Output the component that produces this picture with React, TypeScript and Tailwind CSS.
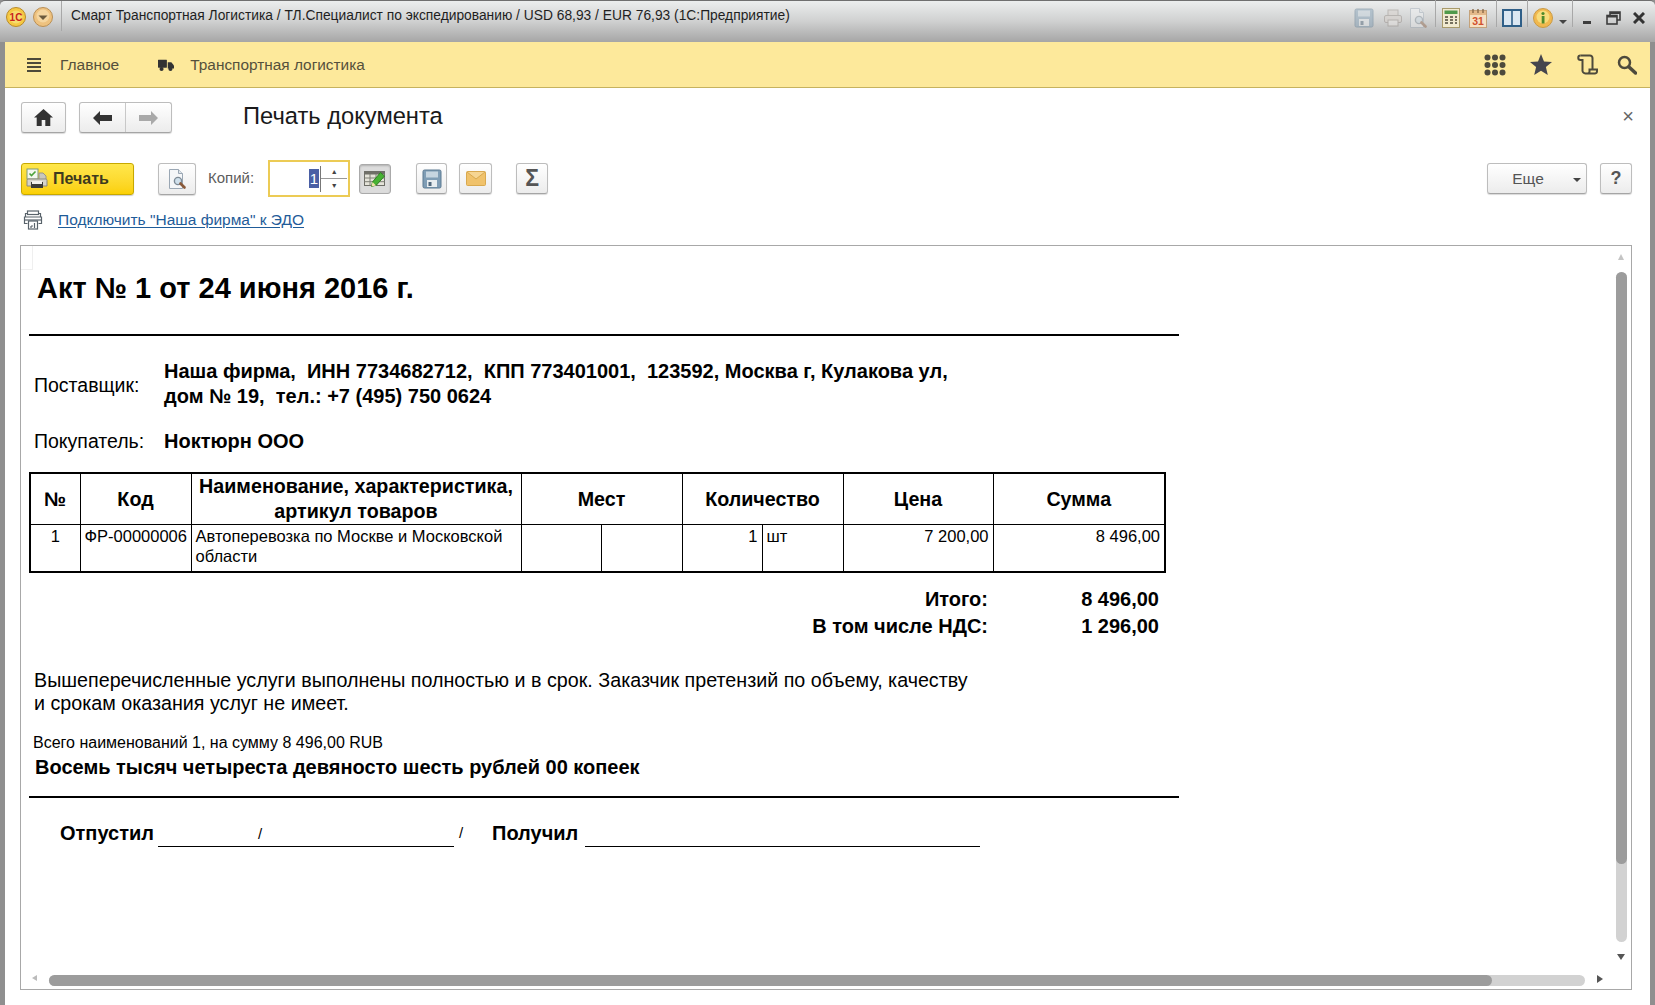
import type { ReactNode } from "react";

const btn =
  "flex items-center justify-center rounded-[3px] border border-[#bdbdbd] border-b-[#a5a5a5] bg-gradient-to-b from-white to-[#ececec] shadow-[0_1px_1px_rgba(0,0,0,0.15)]";

function Sep() {
  return <div className="h-[30px] w-px bg-[#a8a8a8]" />;
}

function OneCLogo() {
  return (
    <svg width="20" height="20" viewBox="0 0 20 20">
      <circle cx="10" cy="10" r="9.5" fill="#f5c842" stroke="#b98a2a" />
      <circle cx="10" cy="10" r="6.5" fill="#f7dc6e" />
      <text x="10" y="13.5" textAnchor="middle" fontSize="10" fontWeight="700" fill="#c8231c" fontFamily="Liberation Sans">
        1С
      </text>
    </svg>
  );
}

function MenuCircle() {
  return (
    <svg width="20" height="20" viewBox="0 0 20 20">
      <circle cx="10" cy="10" r="9.5" fill="#eec27f" stroke="#b98f55" />
      <circle cx="10" cy="9" r="6.5" fill="#f5d6a0" />
      <path d="M5.5 8.5h9L10 13z" fill="#6b5a3e" />
    </svg>
  );
}

function FloppyIcon({ faded }: { faded?: boolean }) {
  return (
    <svg width="20" height="20" viewBox="0 0 20 20" opacity={faded ? 0.45 : 1}>
      <rect x="1" y="1" width="18" height="18" rx="1.5" fill="#7f9db5" stroke="#5d7a92" />
      <rect x="4" y="2.5" width="12" height="6" fill="#c6d5e0" />
      <rect x="5" y="11" width="10" height="7" fill="#e8edf0" />
      <rect x="6.5" y="13" width="3" height="4" fill="#50687c" />
    </svg>
  );
}

function PreviewIcon({ faded }: { faded?: boolean }) {
  return (
    <svg width="22" height="22" viewBox="0 0 22 22" opacity={faded ? 0.4 : 1}>
      <path d="M3.5 1.5h9l4 4v15h-13z" fill="#f4f6f8" stroke="#9aa7b4" />
      <path d="M12.5 1.5v4h4" fill="#dfe5ea" stroke="#9aa7b4" />
      <circle cx="12" cy="13" r="3.6" fill="#cfe0ec" stroke="#7c8a96" strokeWidth="1.4" />
      <path d="M14.5 15.5l4 4" stroke="#8a5a3a" strokeWidth="2.6" strokeLinecap="round" />
    </svg>
  );
}

function PrinterIcon() {
  return (
    <svg width="22" height="22" viewBox="0 0 22 22">
      <rect x="1" y="1" width="11" height="10" fill="#f4f7ee" stroke="#7f9a78" />
      <path d="M3.5 5.5l2 2 4-4" fill="none" stroke="#4da23c" strokeWidth="1.6" />
      <path d="M13 5h4l3 3v4h-7z" fill="#c9c7bd" stroke="#98958a" />
      <path d="M2 11h18a1.5 1.5 0 0 1 1 1.5V18H1v-5.5A1.5 1.5 0 0 1 2 11z" fill="#d6d4ca" stroke="#8c897e" />
      <rect x="5" y="14" width="12" height="6" fill="#3d3d38" />
      <rect x="6" y="13" width="10" height="3" fill="#f2f1eb" />
    </svg>
  );
}

function TableEditIcon() {
  return (
    <svg width="24" height="20" viewBox="0 0 24 20">
      <rect x="1.5" y="2.5" width="20" height="14" fill="#e4e3d9" stroke="#6f6f68" />
      <rect x="1.5" y="2.5" width="20" height="3" fill="#6f6f68" />
      <path d="M1.5 9h20M1.5 12.7h20M7 5v11.5M13 5v11.5" stroke="#7e7e76" />
      <path d="M8.500 17.500l1-4.500 8-9.500 4 3.500-8 9z" fill="#46b233" stroke="#2f7f22" />
      <path d="M9.500 13l3.500 3.500-4.500 1z" fill="#f1e3a8" />
    </svg>
  );
}

function MailIcon() {
  return (
    <svg width="20" height="15" viewBox="0 0 20 15">
      <rect x="0.5" y="0.5" width="19" height="14" rx="1" fill="#f0c26b" stroke="#d9a94f" />
      <path d="M1 1l9 7 9-7" fill="#f6d592" stroke="#d9a94f" />
    </svg>
  );
}

function EdoIcon() {
  return (
    <svg width="20" height="20" viewBox="0 0 20 20" fill="none" stroke="#59636b" strokeWidth="1.2">
      <rect x="4.500" y="1" width="11" height="3.500" />
      <path d="M2.500 7V3.500h2M17.500 7V3.500h-2" />
      <path d="M4.500 13.500h-3V7h17v6.500h-3" />
      <path d="M1.500 10h17" />
      <rect x="5.500" y="11" width="9" height="8" />
      <path d="M8 16v2M8 16h2M11.500 13v5" />
    </svg>
  );
}

function Spin({ children }: { children: ReactNode }) {
  return <div className="flex flex-1 items-center justify-center text-[7px] leading-none text-[#444]">{children}</div>;
}

function TitleBar() {
  return (
    <div className="flex h-[42px] items-start rounded-t-[5px] border-t border-[#6f6f6f] bg-gradient-to-b from-[#eceeee] via-[#cfd0d0] to-[#a6a6a6]">
      <div className="ml-[6px] mt-[6px]">
        <OneCLogo />
      </div>
      <div className="ml-[7px] mt-[6px]">
        <MenuCircle />
      </div>
      <div className="ml-[8px]">
        <Sep />
      </div>
      <div className="ml-[9px] mt-[6px] text-[13.8px] leading-[18px] text-[#1f1f1f]">
        Смарт Транспортная Логистика / ТЛ.Специалист по экспедированию / USD 68,93 / EUR 76,93 (1С:Предприятие)
      </div>
      <div className="ml-auto mr-[10px] mt-[6px] flex items-center">
        <FloppyIcon faded />
        <div className="ml-[9px] opacity-40">
          <svg width="20" height="20" viewBox="0 0 20 20" fill="#d8cfc8" stroke="#8a8079">
            <rect x="5" y="2" width="10" height="6" />
            <rect x="1.5" y="7.5" width="17" height="7" rx="1.5" />
            <rect x="5" y="12" width="10" height="6" fill="#f2eeea" />
          </svg>
        </div>
        <div className="ml-[4px]">
          <PreviewIcon faded />
        </div>
        <div className="ml-[6px] -mt-[12px]">
          <Sep />
        </div>
        <div className="ml-[6px]">
          <svg width="18" height="20" viewBox="0 0 18 20">
            <rect x="0.5" y="0.5" width="17" height="19" fill="#f1ead0" stroke="#a89a6a" />
            <rect x="2.5" y="2.5" width="13" height="3.5" fill="#4f9a4a" />
            <path d="M3 9h3M8 9h3M13 9h2M3 12h3M8 12h3M13 12h2M3 15h3M8 15h3M13 15h2" stroke="#4d4a3a" strokeWidth="1.6" />
          </svg>
        </div>
        <div className="ml-[9px]">
          <svg width="18" height="20" viewBox="0 0 18 20">
            <rect x="0.5" y="2.5" width="17" height="17" fill="#f6e1c4" stroke="#c4a27a" />
            <rect x="1" y="3" width="16" height="4" fill="#e4b98a" />
            <path d="M4 1v4M9 1v4M14 1v4" stroke="#8a6a48" strokeWidth="1.4" />
            <text x="9" y="17" textAnchor="middle" fontSize="10.5" fontWeight="700" fill="#d2502c" fontFamily="Liberation Sans">
              31
            </text>
          </svg>
        </div>
        <div className="ml-[9px] -mt-[12px]">
          <Sep />
        </div>
        <div className="ml-[5px]">
          <svg width="20" height="18" viewBox="0 0 20 18">
            <rect x="1" y="1" width="18" height="16" fill="#dbe7f2" stroke="#2f5f88" strokeWidth="2" />
            <path d="M10 1v16" stroke="#2f5f88" strokeWidth="1.6" />
          </svg>
        </div>
        <div className="ml-[5px] -mt-[12px]">
          <Sep />
        </div>
        <div className="ml-[5px]">
          <svg width="20" height="20" viewBox="0 0 20 20">
            <circle cx="10" cy="10" r="9.5" fill="#f1b84e" stroke="#c99a45" />
            <circle cx="10" cy="9" r="6.5" fill="#f8dc7c" />
            <circle cx="10" cy="5.5" r="1.6" fill="#4f8a2c" />
            <rect x="8.7" y="8" width="2.8" height="7.5" fill="#4f8a2c" />
          </svg>
        </div>
        <div className="ml-[6px] mt-[8px] h-0 w-0 border-x-[4px] border-t-[4px] border-x-transparent border-t-[#444]" />
        <div className="ml-[5px] -mt-[12px]">
          <Sep />
        </div>
        <div className="ml-[10px] mt-[8px] h-[3px] w-[8px] bg-[#3d3d3d]" />
        <div className="ml-[15px]">
          <svg width="15" height="14" viewBox="0 0 15 14" fill="none" stroke="#3d3d3d" strokeWidth="1.6">
            <rect x="1" y="4.5" width="10" height="8.5" />
            <path d="M4 4V1h10v8h-3" />
            <path d="M1 5.5h10M4 2h10" strokeWidth="2" />
          </svg>
        </div>
        <div className="ml-[12px]">
          <svg width="12" height="12" viewBox="0 0 12 12" stroke="#333" strokeWidth="3">
            <path d="M1 1l10 10M11 1L1 11" />
          </svg>
        </div>
      </div>
    </div>
  );
}

function MenuBar() {
  return (
    <div className="flex h-[46px] items-center border-b border-[#c6b25e] bg-[#fde99b] text-[#55503c]">
      <div className="ml-[22px] flex w-[14px] flex-col gap-[2px]">
        <div className="h-[2px] bg-[#4d4a3a]" />
        <div className="h-[2px] bg-[#4d4a3a]" />
        <div className="h-[2px] bg-[#4d4a3a]" />
        <div className="h-[2px] bg-[#4d4a3a]" />
      </div>
      <div className="ml-[19px] text-[15.5px]">Главное</div>
      <div className="ml-[39px]">
        <svg width="16" height="14" viewBox="0 0 18 14" fill="#333">
          <rect x="0" y="1" width="10" height="9" rx="0.5" />
          <path d="M11 4h4l3 3.5V11H11z" />
          <circle cx="4" cy="11.5" r="2.3" />
          <circle cx="14" cy="11.5" r="2.3" />
        </svg>
      </div>
      <div className="ml-[16px] text-[15.4px]">Транспортная логистика</div>
      <div className="ml-auto mr-[13px] flex items-center">
        <svg width="22" height="22" viewBox="0 0 22 22" fill="#4d4a3c">
          <circle cx="3.5" cy="3.5" r="3" />
          <circle cx="11" cy="3.5" r="3" />
          <circle cx="18.5" cy="3.5" r="3" />
          <circle cx="3.5" cy="11" r="3" />
          <circle cx="11" cy="11" r="3" />
          <circle cx="18.5" cy="11" r="3" />
          <circle cx="3.5" cy="18.5" r="3" />
          <circle cx="11" cy="18.5" r="3" />
          <circle cx="18.5" cy="18.5" r="3" />
        </svg>
        <svg className="ml-[24px]" width="22" height="21" viewBox="0 0 22 21" fill="#45454d">
          <path d="M11 0l3 7.4 8 .6-6.1 5.1 1.9 7.9L11 16.8 4.200 21l1.900-7.900L0 8l8-.6z" />
        </svg>
        <svg className="ml-[25px]" width="21" height="21" viewBox="0 0 21 21" fill="none" stroke="#4d4a3c" strokeWidth="2">
          <path d="M3.500 1.500h9.500a2.500 2.500 0 0 1 2.500 2.500v11" />
          <path d="M3.500 1.500a2.200 2.200 0 0 0 0 4.500H5.500V16a3 3 0 0 0 3 3.500h9.500a2.300 2.300 0 0 0 2-2.300V15.500h-7.500v2a2 2 0 0 1-2 2" />
        </svg>
        <svg className="ml-[19px]" width="20" height="20" viewBox="0 0 20 20" fill="none" stroke="#4d4a3c">
          <circle cx="7.500" cy="7.500" r="5.500" strokeWidth="2.500" />
          <path d="M12 12l6.500 6" strokeWidth="3.500" strokeLinecap="round" />
        </svg>
      </div>
    </div>
  );
}

function HeaderRow() {
  return (
    <div className="flex items-start pl-[16px] pt-[14px]">
      <div className={`${btn} h-[31px] w-[45px]`}>
        <svg width="19" height="17" viewBox="0 0 19 17" fill="#333">
          <path d="M9.500 0L19 8.500h-2.700V17h-5V11H7.700v6h-5V8.500H0z" />
        </svg>
      </div>
      <div className={`${btn} ml-[13px] h-[31px] w-[93px]`}>
        <div className="flex h-full flex-1 items-center justify-center border-r border-[#c8c8c8]">
          <svg width="19" height="14" viewBox="0 0 19 14" fill="#333">
            <path d="M0 7l7-7v4h12v6H7v4z" />
          </svg>
        </div>
        <div className="flex h-full flex-1 items-center justify-center">
          <svg width="19" height="14" viewBox="0 0 19 14" fill="#a9a9a9">
            <path d="M19 7l-7-7v4H0v6h12v4z" />
          </svg>
        </div>
      </div>
      <div className="ml-[71px] text-[23.7px] leading-[29px] text-[#1a1a1a]">Печать документа</div>
      <div className="ml-auto mr-[16px] mt-[4px] text-[20px] leading-[20px] text-[#666]">×</div>
    </div>
  );
}

function Toolbar() {
  return (
    <div className="mt-[27px] flex h-[37px] items-center pl-[16px]">
      <div className="flex h-[32px] w-[113px] items-center rounded-[3px] border border-[#c7a800] bg-gradient-to-b from-[#ffe74a] to-[#fbd000] pl-[4px] shadow-[0_1px_1px_rgba(0,0,0,0.2)]">
        <PrinterIcon />
        <span className="ml-[5px] text-[16px] font-bold text-[#3d3a1e]">Печать</span>
      </div>
      <div className={`${btn} ml-[24px] h-[32px] w-[38px]`}>
        <PreviewIcon />
      </div>
      <span className="ml-[12px] text-[15px] text-[#5c5c5c]">Копий:</span>
      <div className="ml-[14px] flex h-[37px] w-[82px] items-center justify-end border-2 border-[#eccb55] bg-white">
        <span className="bg-[#4a5fa5] px-[1px] text-[15px] leading-[19px] text-white">1</span>
        <div className="ml-[1px] flex h-[26px] w-[27px] flex-col border-l border-[#777]">
          <Spin>▲</Spin>
          <div className="h-px bg-[#999]" />
          <Spin>▼</Spin>
        </div>
        <div className="w-[1px]" />
      </div>
      <div className="ml-[9px] flex h-[30px] w-[32px] items-center justify-center rounded-[3px] border border-[#aaa] bg-[#dcdcdc] shadow-[inset_0_1px_2px_rgba(0,0,0,0.2)]">
        <TableEditIcon />
      </div>
      <div className={`${btn} ml-[25px] h-[31px] w-[31px]`}>
        <FloppyIcon />
      </div>
      <div className={`${btn} ml-[12px] h-[31px] w-[33px]`}>
        <MailIcon />
      </div>
      <div className={`${btn} ml-[24px] h-[31px] w-[32px] text-[23px] font-bold text-[#555]`}>Σ</div>
      <div className={`${btn} ml-auto h-[31px] w-[100px] text-[15.5px] text-[#555]`}>
        <span className="ml-[-18px]">Еще</span>
        <div className="absolute ml-[80px] mt-[3px] h-0 w-0 border-x-[4px] border-t-[4px] border-x-transparent border-t-[#444]" />
      </div>
      <div className={`${btn} ml-[13px] mr-[18px] h-[31px] w-[32px] text-[18px] font-bold text-[#555]`}>?</div>
    </div>
  );
}

function LinkRow() {
  return (
    <div className="mt-[9px] flex h-[28px] items-center pl-[18px]">
      <EdoIcon />
      <a className="ml-[15px] text-[15.5px] text-[#1f5c99] underline underline-offset-2">Подключить "Наша фирма" к ЭДО</a>
    </div>
  );
}

function Scrollbars() {
  return (
    <>
      <div className="absolute right-[7px] top-[8px] h-0 w-0 border-x-[3px] border-b-[6px] border-x-transparent border-b-[#c4c4c4]" />
      <div className="absolute right-[4px] top-[26px] h-[670px] w-[11px] rounded-full bg-[#d2d2d2]">
        <div className="h-[592px] rounded-full bg-[#9c9c9c]" />
      </div>
      <div className="absolute right-[6px] top-[708px] h-0 w-0 border-x-[4px] border-t-[6px] border-x-transparent border-t-[#555]" />
      <div className="absolute bottom-[8px] left-[11px] h-0 w-0 border-y-[3px] border-r-[5px] border-y-transparent border-r-[#bbb]" />
      <div className="absolute bottom-[3px] left-[28px] h-[11px] w-[1536px] rounded-full bg-[#d2d2d2]">
        <div className="h-[11px] w-[1443px] rounded-full bg-[#9c9c9c]" />
      </div>
      <div className="absolute bottom-[6px] right-[28px] h-0 w-0 border-y-[4px] border-l-[6px] border-y-transparent border-l-[#555]" />
    </>
  );
}

const thCell = "border border-black align-middle text-center text-[19.7px] font-bold leading-[25px]";
const tdCell = "border border-black align-top px-[4px] pt-[1px] text-[16.5px] leading-[20px] font-normal";

function ItemsTable() {
  return (
    <table className="ml-[-1px] w-[1135px] table-fixed border-collapse border-2 border-black text-black">
      <colgroup>
        <col className="w-[50px]" />
        <col className="w-[111px]" />
        <col className="w-[330px]" />
        <col className="w-[80px]" />
        <col className="w-[81px]" />
        <col className="w-[80px]" />
        <col className="w-[81px]" />
        <col className="w-[150px]" />
        <col className="w-[172px]" />
      </colgroup>
      <thead>
        <tr className="h-[50px]">
          <th className={thCell}>№</th>
          <th className={thCell}>Код</th>
          <th className={thCell}>
            Наименование, характеристика,
            <br />
            артикул товаров
          </th>
          <th colSpan={2} className={thCell}>
            Мест
          </th>
          <th colSpan={2} className={thCell}>
            Количество
          </th>
          <th className={thCell}>Цена</th>
          <th className={thCell}>Сумма</th>
        </tr>
      </thead>
      <tbody>
        <tr className="h-[47px]">
          <td className={`${tdCell} text-center`}>1</td>
          <td className={`${tdCell} whitespace-nowrap`}>ФР-00000006</td>
          <td className={tdCell}>Автоперевозка по Москве и Московской области</td>
          <td className={tdCell} />
          <td className={tdCell} />
          <td className={`${tdCell} text-right`}>1</td>
          <td className={tdCell}>шт</td>
          <td className={`${tdCell} text-right`}>7 200,00</td>
          <td className={`${tdCell} text-right`}>8 496,00</td>
        </tr>
      </tbody>
    </table>
  );
}

function Document() {
  return (
    <div className="relative ml-[15px] mr-[18px] mt-[11px] h-[745px] border border-[#a8a8a8] bg-white pl-[9px] text-black">
      <div className="absolute left-0 top-0 h-[24px] w-[12px] border-b border-r border-[#efefef]" />
      <div className="flex h-[82px] items-center pl-[7px] pt-[4px] text-[29px] font-bold">Акт № 1 от 24 июня 2016 г.</div>
      <div className="ml-[-1px] mt-[6px] h-[2px] w-[1150px] bg-black" />

      <div className="mt-[23px] flex items-center pl-[4px]">
        <div className="w-[130px] pt-[3px] text-[19.5px]">Поставщик:</div>
        <div className="text-[20px] font-bold leading-[25px]">
          Наша фирма,&nbsp; ИНН 7734682712,&nbsp; КПП 773401001,&nbsp; 123592, Москва г, Кулакова ул,
          <br />
          дом № 19,&nbsp; тел.: +7 (495) 750 0624
        </div>
      </div>
      <div className="mt-[19px] flex h-[25px] items-center pl-[4px]">
        <div className="w-[130px] pt-[2px] text-[19.5px]">Покупатель:</div>
        <div className="text-[20px] font-bold">Ноктюрн ООО</div>
      </div>

      <div className="mt-[19px]">
        <ItemsTable />
      </div>

      <div className="mt-[13px] w-[1129px] text-[20px] font-bold leading-[27px]">
        <div className="flex justify-end">
          <span>Итого:</span>
          <span className="w-[171px] text-right">8 496,00</span>
        </div>
        <div className="flex justify-end">
          <span>В том числе НДС:</span>
          <span className="w-[171px] text-right">1 296,00</span>
        </div>
      </div>

      <div className="mt-[29px] pl-[4px] text-[19.7px] leading-[23px]">
        Вышеперечисленные услуги выполнены полностью и в срок. Заказчик претензий по объему, качеству
        <br />и срокам оказания услуг не имеет.
      </div>
      <div className="mt-[18px] pl-[3px] text-[16px] leading-[20px]">Всего наименований 1, на сумму 8 496,00 RUB</div>
      <div className="mt-[2px] pl-[5px] text-[20px] font-bold leading-[24px]">
        Восемь тысяч четыреста девяносто шесть рублей 00 копеек
      </div>
      <div className="ml-[-1px] mt-[17px] h-[2px] w-[1150px] bg-black" />

      <div className="mt-[22px] flex h-[27px] items-center pl-[30px] text-[20px] font-bold">
        <span className="w-[98px]">Отпустил</span>
        <div className="relative h-[27px] w-[296px] border-b border-black">
          <span className="absolute left-[100px] top-[3px] text-[15px] font-normal">/</span>
        </div>
        <span className="ml-[5px] w-[33px] text-[15px] font-normal">/</span>
        <span className="w-[93px]">Получил</span>
        <div className="h-[27px] w-[395px] border-b border-black" />
      </div>
      <Scrollbars />
    </div>
  );
}

export default function App() {
  return (
    <div className="h-[1005px] w-[1655px] overflow-hidden bg-[#8f8f8f] font-['Liberation_Sans',Arial,sans-serif]">
      <TitleBar />
      <div className="ml-[5px] mr-[5px] h-[963px] bg-white">
        <MenuBar />
        <HeaderRow />
        <Toolbar />
        <LinkRow />
        <Document />
      </div>
    </div>
  );
}
